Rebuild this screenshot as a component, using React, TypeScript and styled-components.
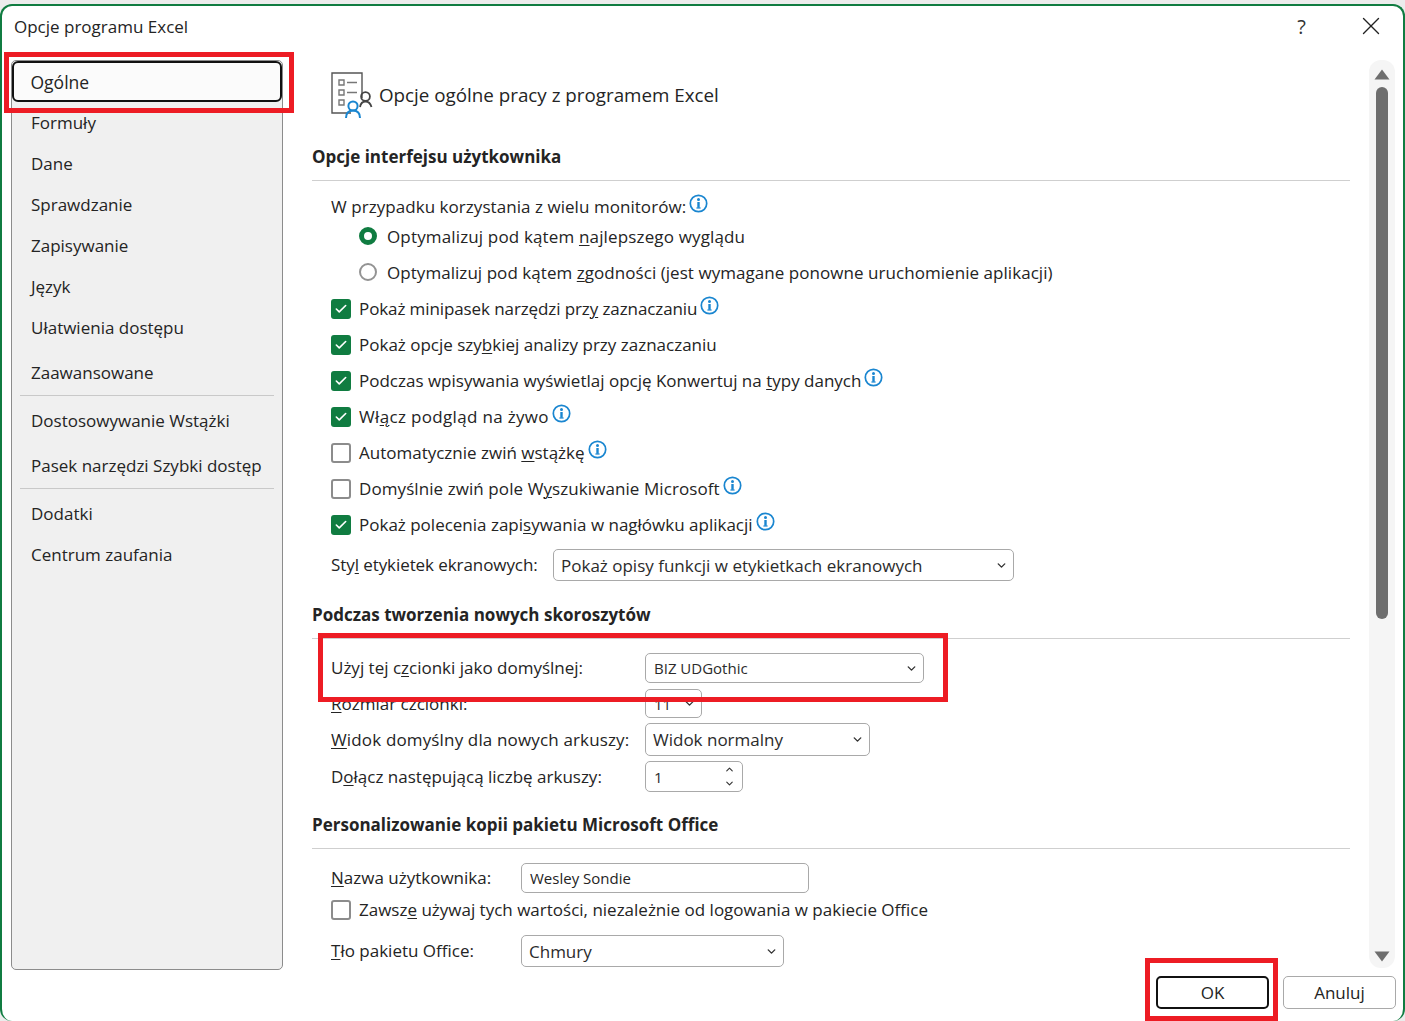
import { ReactNode } from "react";
import styled, { createGlobalStyle } from "styled-components";
import { Check, ChevronDown, ChevronUp, X } from "lucide-react";

const GlobalStyle = createGlobalStyle`
  html, body {
    margin: 0;
    padding: 0;
    background: #ececec;
  }
  * {
    box-sizing: border-box;
  }
  body {
    font-family: "Open Sans", "Noto Sans", "Liberation Sans", sans-serif;
    font-size: 17px;
    color: #242424;
  }
  u {
    text-underline-offset: 2px;
    text-decoration-thickness: 1px;
  }
`;

const Page = styled.div`
  position: relative;
  width: 1405px;
  height: 1021px;
  padding-top: 4px;
  overflow: hidden;
`;

const DialogWindow = styled.div`
  height: 1017px;
  background: #fff;
  border: 2px solid #107c41;
  border-bottom: 0;
  border-radius: 12px;
  display: flex;
  flex-direction: column;
`;

const TitleBar = styled.header`
  height: 54px;
  flex: none;
  display: flex;
  align-items: center;
  padding: 0 17px 14px 12px;
`;

const TitleText = styled.div`
  flex: 1;
  font-size: 17px;
`;

const HelpButton = styled.div`
  font-size: 20px;
  margin-right: 50px;
  color: #333;
`;

const Body = styled.div`
  height: 910px;
  flex: none;
  display: flex;
  padding: 0 8px 0 9px;
`;

const Sidebar = styled.nav`
  width: 272px;
  flex: none;
  background: #f0f0f0;
  border: 1px solid #8c8c8c;
  border-radius: 5px;
  padding: 0 8px;
`;

const SideItem = styled.div<{ $selected?: boolean; $top?: number }>`
  height: 41px;
  display: flex;
  align-items: center;
  margin-top: ${({ $top }) => $top ?? 0}px;
  padding-left: 11px;
  padding-bottom: 1px;
  ${({ $selected }) =>
    $selected
      ? `
    margin: 0 -8px;
    padding-left: 16.5px;
    padding-bottom: 0;
    background: #fbfbfb;
    border: 2.5px solid #111;
    border-radius: 6px;
    font-size: 17.5px;
    `
      : ""}
`;

const SideDivider = styled.div<{ $top: number }>`
  height: 1px;
  margin-top: ${({ $top }) => $top}px;
  margin-bottom: 4px;
  background: #c9c9c9;
`;

const Main = styled.main`
  flex: 1;
  margin-left: 29px;
  height: 907px;
  overflow: hidden;
`;

const PageHeader = styled.div`
  height: 46px;
  margin-top: 12px;
  padding-left: 19px;
  display: flex;
  align-items: center;
  gap: 6px;
  font-size: 18.8px;
`;

const SectionTitle = styled.h2<{ $top: number }>`
  margin: ${({ $top }) => $top}px 0 0;
  height: 37px;
  padding-bottom: 11px;
  border-bottom: 1px solid #cfcfcf;
  display: flex;
  align-items: center;
  font-size: 17px;
  font-weight: 700;
`;

const SectionBody = styled.div`
  padding-left: 19px;
`;

const Label = styled.span<{ $track?: number }>`
  padding-bottom: 1px;
  letter-spacing: ${({ $track }) => $track ?? 0}px;
`;

const IntroRow = styled.div`
  height: 24px;
  margin-top: 14px;
  display: flex;
  align-items: center;
`;

const OptionRow = styled.div<{ $indent?: boolean; $height?: number; $top?: number }>`
  height: ${({ $height }) => $height ?? 36}px;
  margin-top: ${({ $top }) => $top ?? 0}px;
  margin-left: ${({ $indent }) => ($indent ? 28 : 0)}px;
  display: flex;
  align-items: center;
`;

const CheckBox = styled.span<{ $checked: boolean }>`
  width: 20px;
  height: 20px;
  flex: none;
  margin-right: 8px;
  border-radius: 3px;
  display: flex;
  align-items: center;
  justify-content: center;
  color: #fff;
  background: ${({ $checked }) => ($checked ? "#107c41" : "#fff")};
  border: ${({ $checked }) => ($checked ? "none" : "2px solid #8c8c8c")};
`;

const Radio = styled.span<{ $checked: boolean }>`
  width: 18px;
  height: 18px;
  flex: none;
  margin-right: 10px;
  margin-bottom: 3px;
  border-radius: 50%;
  background: #fff;
  border: ${({ $checked }) =>
    $checked ? "5px solid #107c41" : "2px solid #939393"};
`;

const InfoMark = styled.svg`
  width: 19px;
  height: 19px;
  flex: none;
  margin-left: 3px;
  margin-bottom: 7px;
`;

const FieldRow = styled.div<{ $top: number; $height: number; $label: number }>`
  height: ${({ $height }) => $height}px;
  margin-top: ${({ $top }) => $top}px;
  display: grid;
  grid-template-columns: ${({ $label }) => $label}px auto;
  justify-content: start;
  align-items: center;
`;

const ComboBox = styled.div<{ $width: number; $small?: boolean }>`
  width: ${({ $width }) => $width}px;
  height: 100%;
  border: 1px solid #a9a9a9;
  border-radius: 5px;
  background: #fff;
  display: flex;
  align-items: center;
  justify-content: space-between;
  padding: 0 5px 0 ${({ $small }) => ($small ? 8 : 7)}px;
  font-size: ${({ $small }) => ($small ? 15 : 17)}px;
  color: #2b2b2b;
`;

const Spinner = styled.span`
  display: flex;
  flex-direction: column;
  gap: 3px;
  margin-right: 2px;
`;

const FieldInput = styled.div`
  width: 288px;
  height: 100%;
  border: 1px solid #a9a9a9;
  border-radius: 5px;
  display: flex;
  align-items: center;
  padding-left: 8px;
  font-size: 15px;
`;

const ScrollBar = styled.div`
  width: 26px;
  margin-left: 19px;
  height: 908px;
  flex: none;
  background: #f5f5f5;
  border-radius: 12px;
  display: flex;
  flex-direction: column;
  align-items: center;
  justify-content: space-between;
  padding: 9px 0 6px;
`;

const ScrollTop = styled.div`
  display: flex;
  flex-direction: column;
  align-items: center;
`;

const ScrollArrow = styled.svg`
  width: 16px;
  height: 11px;
  flex: none;
  fill: #6e6e6e;
`;

const ScrollThumb = styled.div`
  width: 12px;
  height: 532px;
  margin-top: 7px;
  border-radius: 6px;
  background: #6e6e6e;
`;

const Footer = styled.footer`
  display: flex;
  justify-content: flex-end;
  gap: 14px;
  padding: 6px 7px 0 0;
`;

const DialogButton = styled.div<{ $primary?: boolean }>`
  width: 113px;
  height: 33px;
  display: flex;
  align-items: center;
  justify-content: center;
  border-radius: 5px;
  border: ${({ $primary }) =>
    $primary ? "2.5px solid #111" : "1px solid #a9a9a9"};
`;

const Callout = styled.div<{ $x: number; $y: number; $w: number; $h: number }>`
  position: absolute;
  left: ${({ $x }) => $x}px;
  top: ${({ $y }) => $y}px;
  width: ${({ $w }) => $w}px;
  height: ${({ $h }) => $h}px;
  border: 5px solid #ed1c24;
  pointer-events: none;
`;

const Info = () => (
  <InfoMark viewBox="0 0 19 19">
    <circle cx="9.5" cy="9.5" r="8.2" fill="#fff" stroke="#1a86d0" strokeWidth="1.7" />
    <circle cx="9.5" cy="5.5" r="1.5" fill="#1a86d0" />
    <path d="M9.500 8v5.800" fill="none" stroke="#1a86d0" strokeWidth="2.400" />
    <path d="M7.400 14h4.200" fill="none" stroke="#1a86d0" strokeWidth="1.200" />
  </InfoMark>
);

const Option = ({
  checked,
  info,
  children,
}: {
  checked: boolean;
  info?: boolean;
  children: ReactNode;
}) => (
  <OptionRow>
    <CheckBox $checked={checked}>
      {checked && <Check size={14} strokeWidth={2.8} />}
    </CheckBox>
    {children}
    {info && <Info />}
  </OptionRow>
);

const Chevron = () => <ChevronDown size={13} strokeWidth={2.6} color="#333" />;

const GeneralIcon = () => (
  <svg width="42" height="46" viewBox="0 0 42 46" fill="none">
    <path d="M20 41H1V1h30v25" stroke="#555" strokeWidth="1.4" />
    <path d="M8 8h5v5H8zM8 18h5v5H8zM8 28h5v5H8z" stroke="#777" strokeWidth="1.4" />
    <path d="M16 10.500h10M16 20.500h10" stroke="#777" strokeWidth="1.4" />
    <circle cx="22" cy="34" r="4.600" stroke="#1a86d0" strokeWidth="2" />
    <path d="M15 46c0-5 3-7.500 7-7.500s7 2.500 7 7.500" stroke="#1a86d0" strokeWidth="2" />
    <circle cx="34.500" cy="24.500" r="4.400" stroke="#444" strokeWidth="1.800" />
    <path d="M29 35c.6-3.500 2.500-5.500 5.500-5.500s5 2 6 5.500" stroke="#444" strokeWidth="1.800" />
  </svg>
);

export default function App() {
  return (
    <>
      <GlobalStyle />
      <Page>
        <DialogWindow>
          <TitleBar>
            <TitleText>Opcje programu Excel</TitleText>
            <HelpButton>?</HelpButton>
            <X size={30} strokeWidth={1.1} color="#222" />
          </TitleBar>
          <Body>
            <Sidebar>
              <SideItem $selected>Ogólne</SideItem>
              <SideItem>Formuły</SideItem>
              <SideItem>Dane</SideItem>
              <SideItem>Sprawdzanie</SideItem>
              <SideItem>Zapisywanie</SideItem>
              <SideItem>Język</SideItem>
              <SideItem>Ułatwienia dostępu</SideItem>
              <SideItem $top={4}>Zaawansowane</SideItem>
              <SideDivider $top={2} />
              <SideItem>Dostosowywanie Wstążki</SideItem>
              <SideItem $top={4}>Pasek narzędzi Szybki dostęp</SideItem>
              <SideDivider $top={2} />
              <SideItem>Dodatki</SideItem>
              <SideItem>Centrum zaufania</SideItem>
            </Sidebar>
            <Main>
              <PageHeader>
                <GeneralIcon />
                <Label>Opcje ogólne pracy z programem Excel</Label>
              </PageHeader>
              <SectionTitle $top={26}>Opcje interfejsu użytkownika</SectionTitle>
              <SectionBody>
                <IntroRow>
                  <Label $track={0.05}>W przypadku korzystania z wielu monitorów:</Label>
                  <Info />
                </IntroRow>
                <OptionRow $indent>
                  <Radio $checked />
                  <Label $track={0.15}>
                    Optymalizuj pod kątem <u>n</u>ajlepszego wyglądu
                  </Label>
                </OptionRow>
                <OptionRow $indent>
                  <Radio $checked={false} />
                  <Label $track={0.05}>
                    Optymalizuj pod kątem <u>z</u>godności (jest wymagane ponowne
                    uruchomienie aplikacji)
                  </Label>
                </OptionRow>
                <Option checked info>
                  <Label $track={-0.1}>
                    Pokaż minipasek narzędzi prz<u>y</u> zaznaczaniu
                  </Label>
                </Option>
                <Option checked>
                  <Label>
                    Pokaż opcje szy<u>b</u>kiej analizy przy zaznaczaniu
                  </Label>
                </Option>
                <Option checked info>
                  <Label>
                    Podczas wpisywania wyświetlaj opcję Konwertuj na <u>t</u>ypy danych
                  </Label>
                </Option>
                <Option checked info>
                  <Label $track={0.33}>
                    Wł<u>ą</u>cz podgląd na żywo
                  </Label>
                </Option>
                <Option checked={false} info>
                  <Label>
                    Automatycznie zwiń <u>w</u>stążkę
                  </Label>
                </Option>
                <Option checked={false} info>
                  <Label $track={0.08}>
                    Domyślnie zwiń pole W<u>y</u>szukiwanie Microsoft
                  </Label>
                </Option>
                <Option checked info>
                  <Label>
                    Pokaż polecenia zapi<u>s</u>ywania w nagłówku aplikacji
                  </Label>
                </Option>
                <FieldRow $top={6} $height={32} $label={222}>
                  <Label $track={-0.08}>
                    Sty<u>l</u> etykietek ekranowych:
                  </Label>
                  <ComboBox $width={461}>
                    Pokaż opisy funkcji w etykietkach ekranowych
                    <Chevron />
                  </ComboBox>
                </FieldRow>
              </SectionBody>
              <SectionTitle $top={21}>Podczas tworzenia nowych skoroszytów</SectionTitle>
              <SectionBody>
                <FieldRow $top={14} $height={30} $label={314}>
                  <Label>
                    Użyj tej c<u>z</u>cionki jako domyślnej:
                  </Label>
                  <ComboBox $width={279} $small>
                    BIZ UDGothic
                    <Chevron />
                  </ComboBox>
                </FieldRow>
                <FieldRow $top={6} $height={29} $label={314}>
                  <Label>
                    <u>R</u>ozmiar czcionki:
                  </Label>
                  <ComboBox $width={57} $small>
                    11
                    <Chevron />
                  </ComboBox>
                </FieldRow>
                <FieldRow $top={5} $height={33} $label={314}>
                  <Label $track={0.15}>
                    <u>W</u>idok domyślny dla nowych arkuszy:
                  </Label>
                  <ComboBox $width={225}>
                    Widok normalny
                    <Chevron />
                  </ComboBox>
                </FieldRow>
                <FieldRow $top={5} $height={31} $label={314}>
                  <Label>
                    D<u>o</u>łącz następującą liczbę arkuszy:
                  </Label>
                  <ComboBox $width={98} $small>
                    1
                    <Spinner>
                      <ChevronUp size={11} strokeWidth={2.4} color="#333" />
                      <ChevronDown size={11} strokeWidth={2.4} color="#333" />
                    </Spinner>
                  </ComboBox>
                </FieldRow>
              </SectionBody>
              <SectionTitle $top={20}>Personalizowanie kopii pakietu Microsoft Office</SectionTitle>
              <SectionBody>
                <FieldRow $top={14} $height={30} $label={190}>
                  <Label>
                    <u>N</u>azwa użytkownika:
                  </Label>
                  <FieldInput>Wesley Sondie</FieldInput>
                </FieldRow>
                <OptionRow $top={5} $height={24}>
                  <CheckBox $checked={false} />
                  <Label>
                    Zawsz<u>e</u> używaj tych wartości, niezależnie od logowania w pakiecie Office
                  </Label>
                </OptionRow>
                <FieldRow $top={13} $height={32} $label={190}>
                  <Label>
                    <u>T</u>ło pakietu Office:
                  </Label>
                  <ComboBox $width={263}>
                    Chmury
                    <Chevron />
                  </ComboBox>
                </FieldRow>
              </SectionBody>
            </Main>
            <ScrollBar>
              <ScrollTop>
                <ScrollArrow viewBox="0 0 16 11">
                  <path d="M8 0.500 15.500 10.500H0.500Z" />
                </ScrollArrow>
                <ScrollThumb />
              </ScrollTop>
              <ScrollArrow viewBox="0 0 16 11">
                <path d="M8 10.500 15.500 0.500H0.500Z" />
              </ScrollArrow>
            </ScrollBar>
          </Body>
          <Footer>
            <DialogButton $primary>OK</DialogButton>
            <DialogButton>Anuluj</DialogButton>
          </Footer>
        </DialogWindow>
        <Callout $x={4} $y={52} $w={290} $h={61} />
        <Callout $x={318} $y={633} $w={630} $h={69} />
        <Callout $x={1145} $y={958} $w={133} $h={63} />
      </Page>
    </>
  );
}
